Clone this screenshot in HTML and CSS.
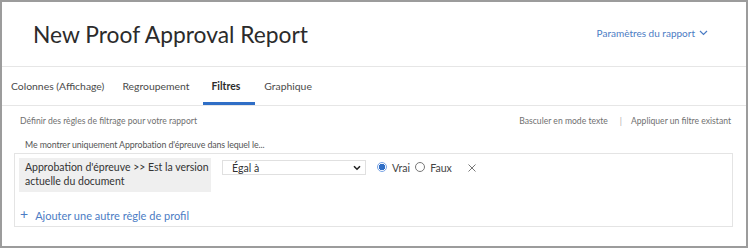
FILE: index.html
```html
<!DOCTYPE html>
<html lang="fr">
<head>
<meta charset="utf-8">
<link rel="stylesheet" href="styles.css">
</head>
<body>
<div class="frame">
  <header class="header">
    <h1 class="title">New Proof Approval Report</h1>
    <a class="settings">Paramètres du rapport <svg class="chev" width="9" height="6" viewBox="0 0 9 6"><path d="M1 1l3.5 3.5L8 1" fill="none" stroke="#4b7cc4" stroke-width="1.2"/></svg></a>
  </header>
  <nav class="tabs">
    <span class="tab">Colonnes (Affichage)</span>
    <span class="tab">Regroupement</span>
    <span class="tab active">Filtres</span>
    <span class="tab">Graphique</span>
  </nav>
  <section class="content">
    <div class="toolbar">
      <span class="hint">Définir des règles de filtrage pour votre rapport</span>
      <span class="actions"><span>Basculer en mode texte</span><span class="sep">|</span><span>Appliquer un filtre existant</span></span>
    </div>
    <div class="caption">Me montrer uniquement Approbation d'épreuve dans lequel le...</div>
    <div class="rules">
      <div class="rule">
        <div class="field"><span class="line">Approbation d'épreuve &gt;&gt; Est la version</span><span class="line">actuelle du document</span></div>
        <div class="select"><span>Égal à</span><svg width="8" height="6" viewBox="0 0 8 6"><path d="M1 1.2l3 3 3-3" fill="none" stroke="#222" stroke-width="1.6"/></svg></div>
        <label class="radio"><span class="dot on"></span>Vrai</label>
        <label class="radio"><span class="dot"></span>Faux</label>
        <span class="close"><svg width="8" height="8" viewBox="0 0 8 8"><path d="M0.5 0.5l7 7M7.5 0.5l-7 7" stroke="#777" stroke-width="1"/></svg></span>
      </div>
      <div class="add"><span class="plus">+</span>Ajouter une autre règle de profil</div>
    </div>
  </section>
</div>
</body>
</html>
```
FILE: styles.css
```css
* { box-sizing: border-box; }
body { margin: 0; background: #fff; font-family: "Lato", "Open Sans", sans-serif; }
.frame { width: 748px; height: 248px; border: 2px solid #9c9c9c; background: #fff; }
.header { height: 65px; display: flex; align-items: center; justify-content: space-between; padding: 0 38px 0 31px; border-bottom: 1px solid #e6e6e6; }
.title { margin: 0; font-weight: 400; font-size: 22.8px; color: #2b2b2b; }
.settings { font-size: 10px; color: #4b7cc4; display: flex; align-items: center; gap: 4px; margin-top: -3px; }
.tabs { height: 39px; display: flex; align-items: stretch; padding-left: 0; border-bottom: 1px solid #e6e6e6; }
.tab { display: flex; align-items: center; padding: 3px 9px 0 9px; font-size: 10.4px; color: #4a4a4a; border-bottom: 3px solid transparent; }
.tab.active { font-weight: 700; color: #2c2c2c; border-bottom-color: #2f6ec6; padding: 3px 15px 0 9px; margin-left: 4px; }
.content { padding: 0 13px 0 12px; }
.toolbar { display: flex; justify-content: space-between; align-items: center; height: 29px; padding: 0 2px 0 6px; font-size: 8.6px; color: #707070; }
.actions { display: flex; }
.sep { margin: 0 9px 0 12px; color: #aaa; }
.caption { font-size: 8.8px; color: #555; padding-left: 11px; height: 16px; line-height: 16px; margin-top: 2px; letter-spacing: -0.1px; }
.rules { border: 1px solid #e4e4e4; height: 74px; padding: 4px 4px 0 4px; }
.rule { display: flex; align-items: flex-start; }
.field { width: 192px; flex: none; background: #efefef; font-size: 10.5px; line-height: 14px; color: #333; padding: 2px 0 4px 6px; display: flex; flex-direction: column; white-space: nowrap; }
.select { margin: 2px 0 0 11px; width: 144px; height: 15px; border: 1px solid #e0e0e0; display: flex; align-items: center; justify-content: space-between; padding: 0 4px 0 9px; font-size: 10.6px; color: #333; }
.radio { display: flex; align-items: center; font-size: 10.6px; color: #444; margin-top: 3px; height: 14px; }
.radio:first-of-type { margin-left: 11px; }
.dot { width: 10px; height: 10px; border-radius: 50%; border: 1px solid #777; margin-right: 5px; background: #fff; margin-top: -3px; }
.dot.on { border: 1px solid #7aa5e6; background: radial-gradient(circle, #2f6ec6 0 3px, #fff 3.5px); }
.radio + .radio { margin-left: 5px; }
.close { margin: 6px 0 0 16px; display: flex; }
.add { display: flex; align-items: center; font-size: 11px; color: #4b7cc4; margin-top: 17px; padding-left: 1px; }
.plus { font-size: 14px; margin-right: 7px; margin-top: -5px; }
```
